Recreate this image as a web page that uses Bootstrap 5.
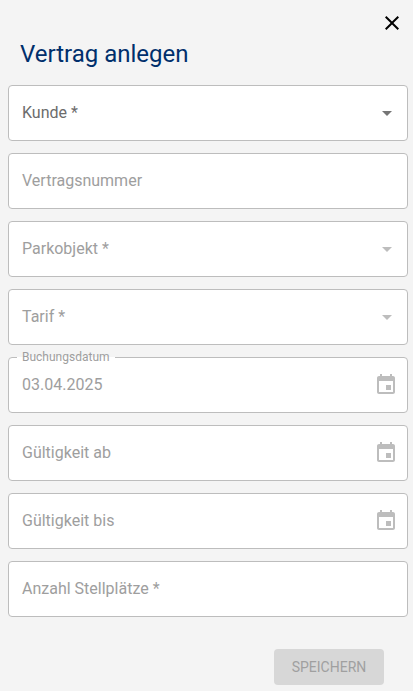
<!DOCTYPE html>
<html lang="de">
<head>
<meta charset="utf-8">
<meta name="viewport" content="width=device-width, initial-scale=1">
<title>Vertrag anlegen</title>
<link href="https://cdn.jsdelivr.net/npm/bootstrap@5.3.0/dist/css/bootstrap.min.css" rel="stylesheet">
<style>
  body { background: #f4f4f4; font-family: Roboto, "Liberation Sans", sans-serif; }
  .dialog-top { padding: 11px 9px 0 0; }
  .icon-btn { line-height: 0; color: #000; }
  .dialog-title { font-size: 24px; line-height: 32px; color: #002f6c; padding: 3px 20px 0; }
  .dialog-form { padding: 15px 5px 0 8px; }
  .field-list { gap: 12px; }
  .field > * { grid-area: 1 / 1; }
  .field-box { height: 56px; padding: 0 13px 2px; font-size: 16px; line-height: 24px; color: #9e9e9e; border: 1px solid #bdbdbd; border-radius: 4px; }
  .field-box, .field-box:disabled { background: #fff; opacity: 1; }
  select.field-box { appearance: none; }
  .field-label { padding-left: 14px; font-size: 16px; line-height: 24px; color: #9e9e9e; }
  .field-label.active { color: #6c6c6c; }
  .field-label.notched { margin: -6px 0 0 9px; padding: 0 5px; font-size: 12px; line-height: 12px; background: linear-gradient(#f4f4f4 6px, #fff 6px); }
  .field-icon { margin-right: 9px; color: #bdbdbd; }
  .field-icon.active { color: #757575; }
  .field-icon.calendar { margin-right: 10px; }
  .form-actions { padding: 32px 24px 6px; }
  .save-btn, .save-btn:disabled { min-width: 110px; height: 36px; padding: 0 15px; font-size: 14px; line-height: 24px; color: #a0a0a0; background: #d7d7d7; border: 0; border-radius: 4px; opacity: 1; }
</style>
<script src="https://cdn.jsdelivr.net/npm/bootstrap@5.3.0/dist/js/bootstrap.bundle.min.js"></script>
</head>
<body>
<svg class="d-none" aria-hidden="true">
  <symbol id="arrow" viewBox="0 0 24 24"><path fill="currentColor" d="M7 10l5 5 5-5z"/></symbol>
  <symbol id="calendar" viewBox="0 0 24 24"><path fill="currentColor" d="M17 12h-5v5h5v-5zM16 1v2H8V1H6v2H5c-1.110 0-1.990.9-1.990 2L3 19c0 1.100.89 2 2 2h14c1.100 0 2-.9 2-2V5c0-1.100-.9-2-2-2h-1V1h-2zm3 18H5V8h14v11z"/></symbol>
</svg>
<main>
  <div class="dialog-top d-flex justify-content-end">
    <button type="button" class="icon-btn btn p-0 border-0" aria-label="Schließen">
      <svg width="24" height="24" viewBox="0 0 24 24" aria-hidden="true"><path fill="currentColor" d="M19 6.410 17.590 5 12 10.590 6.410 5 5 6.410 10.590 12 5 17.590 6.410 19 12 13.410 17.590 19 19 17.590 13.410 12z"/></svg>
    </button>
  </div>
  <h1 class="dialog-title fw-normal m-0">Vertrag anlegen</h1>
  <form class="dialog-form">
    <div class="field-list d-grid">
      <div class="field d-grid align-items-center">
        <select id="kunde" class="field-box w-100" required><option value=""></option></select>
        <label for="kunde" class="field-label active pe-none">Kunde *</label>
        <svg class="field-icon active pe-none ms-auto" width="24" height="24" aria-hidden="true"><use href="#arrow"/></svg>
      </div>
      <div class="field d-grid align-items-center">
        <input id="nummer" type="text" class="field-box w-100" disabled>
        <label for="nummer" class="field-label pe-none">Vertragsnummer</label>
      </div>
      <div class="field d-grid align-items-center">
        <select id="objekt" class="field-box w-100" required disabled><option value=""></option></select>
        <label for="objekt" class="field-label pe-none">Parkobjekt *</label>
        <svg class="field-icon pe-none ms-auto" width="24" height="24" aria-hidden="true"><use href="#arrow"/></svg>
      </div>
      <div class="field d-grid align-items-center">
        <select id="tarif" class="field-box w-100" required disabled><option value=""></option></select>
        <label for="tarif" class="field-label pe-none">Tarif *</label>
        <svg class="field-icon pe-none ms-auto" width="24" height="24" aria-hidden="true"><use href="#arrow"/></svg>
      </div>
      <div class="field d-grid align-items-center">
        <input id="buchung" type="text" class="field-box w-100" value="03.04.2025" disabled>
        <label for="buchung" class="field-label notched pe-none align-self-start me-auto">Buchungsdatum</label>
        <svg class="field-icon calendar pe-none ms-auto" width="24" height="24" aria-hidden="true"><use href="#calendar"/></svg>
      </div>
      <div class="field d-grid align-items-center">
        <input id="ab" type="text" class="field-box w-100" disabled>
        <label for="ab" class="field-label pe-none">Gültigkeit ab</label>
        <svg class="field-icon calendar pe-none ms-auto" width="24" height="24" aria-hidden="true"><use href="#calendar"/></svg>
      </div>
      <div class="field d-grid align-items-center">
        <input id="bis" type="text" class="field-box w-100" disabled>
        <label for="bis" class="field-label pe-none">Gültigkeit bis</label>
        <svg class="field-icon calendar pe-none ms-auto" width="24" height="24" aria-hidden="true"><use href="#calendar"/></svg>
      </div>
      <div class="field d-grid align-items-center">
        <input id="anzahl" type="text" class="field-box w-100" required disabled>
        <label for="anzahl" class="field-label pe-none">Anzahl Stellplätze *</label>
      </div>
    </div>
    <div class="form-actions d-flex justify-content-end">
      <button type="submit" class="save-btn btn text-uppercase" disabled>Speichern</button>
    </div>
  </form>
</main>
</body>
</html>
